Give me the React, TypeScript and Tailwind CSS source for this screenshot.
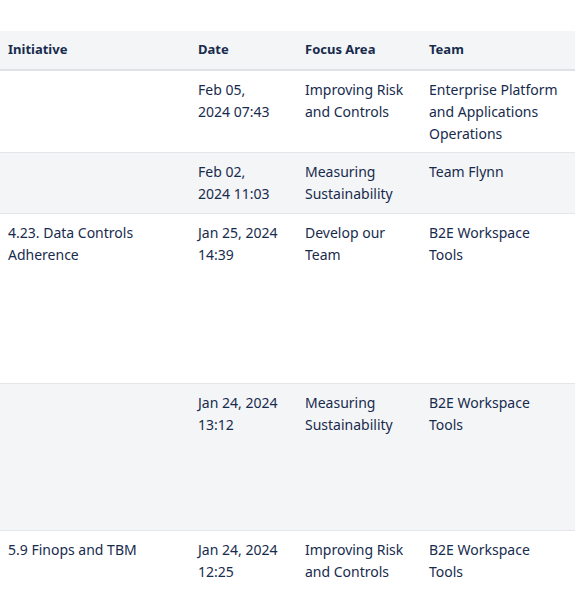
const rows = [
  { init: ["", ""], date: ["Feb 05,", "2024 07:43"], focus: ["Improving Risk", "and Controls"], team: ["Enterprise Platform", "and Applications", "Operations"], h: "h-[82px]" },
  { init: [""], date: ["Feb 02,", "2024 11:03"], focus: ["Measuring", "Sustainability"], team: ["Team Flynn"], h: "h-[61px]" },
  { init: ["4.23. Data Controls", "Adherence"], date: ["Jan 25, 2024", "14:39"], focus: ["Develop our", "Team"], team: ["B2E Workspace", "Tools"], h: "h-[170px]" },
  { init: [""], date: ["Jan 24, 2024", "13:12"], focus: ["Measuring", "Sustainability"], team: ["B2E Workspace", "Tools"], h: "h-[147px]" },
  { init: ["5.9 Finops and TBM"], date: ["Jan 24, 2024", "12:25"], focus: ["Improving Risk", "and Controls"], team: ["B2E Workspace", "Tools"], h: "h-[84px]" },
];

function Lines({ items }: { items: string[] }) {
  return (
    <>
      {items.map((t, i) => (
        <div key={i} className="whitespace-nowrap">{t}</div>
      ))}
    </>
  );
}

export default function App() {
  return (
    <div className="w-[575px] h-[614px] overflow-hidden bg-white pt-[31px] text-[#172b4d]" style={{ fontFamily: '"Noto Sans", "Open Sans", sans-serif' }}>
      <table className="w-[575px] table-fixed border-collapse">
        <colgroup>
          <col className="w-[190px]" />
          <col className="w-[107px]" />
          <col className="w-[124px]" />
          <col />
        </colgroup>
        <thead>
          <tr className="h-[39px] bg-[#f4f5f7] border-b-2 border-[#dfe1e6] text-[13px] font-bold text-left">
            <th className="pl-2">Initiative</th>
            <th className="pl-2">Date</th>
            <th className="pl-2">Focus Area</th>
            <th className="pl-2">Team</th>
          </tr>
        </thead>
        <tbody className="text-[14px] leading-[22px]">
          {rows.map((r, i) => (
            <tr key={i} className={`${r.h} align-top border-b border-[#e4e6ea] ${i % 2 ? "bg-[#f4f5f7]" : "bg-white"}`}>
              <td className="pl-2 pt-2"><Lines items={r.init} /></td>
              <td className="pl-2 pt-2"><Lines items={r.date} /></td>
              <td className="pl-2 pt-2"><Lines items={r.focus} /></td>
              <td className="pl-2 pt-2"><Lines items={r.team} /></td>
            </tr>
          ))}
        </tbody>
      </table>
    </div>
  );
}
